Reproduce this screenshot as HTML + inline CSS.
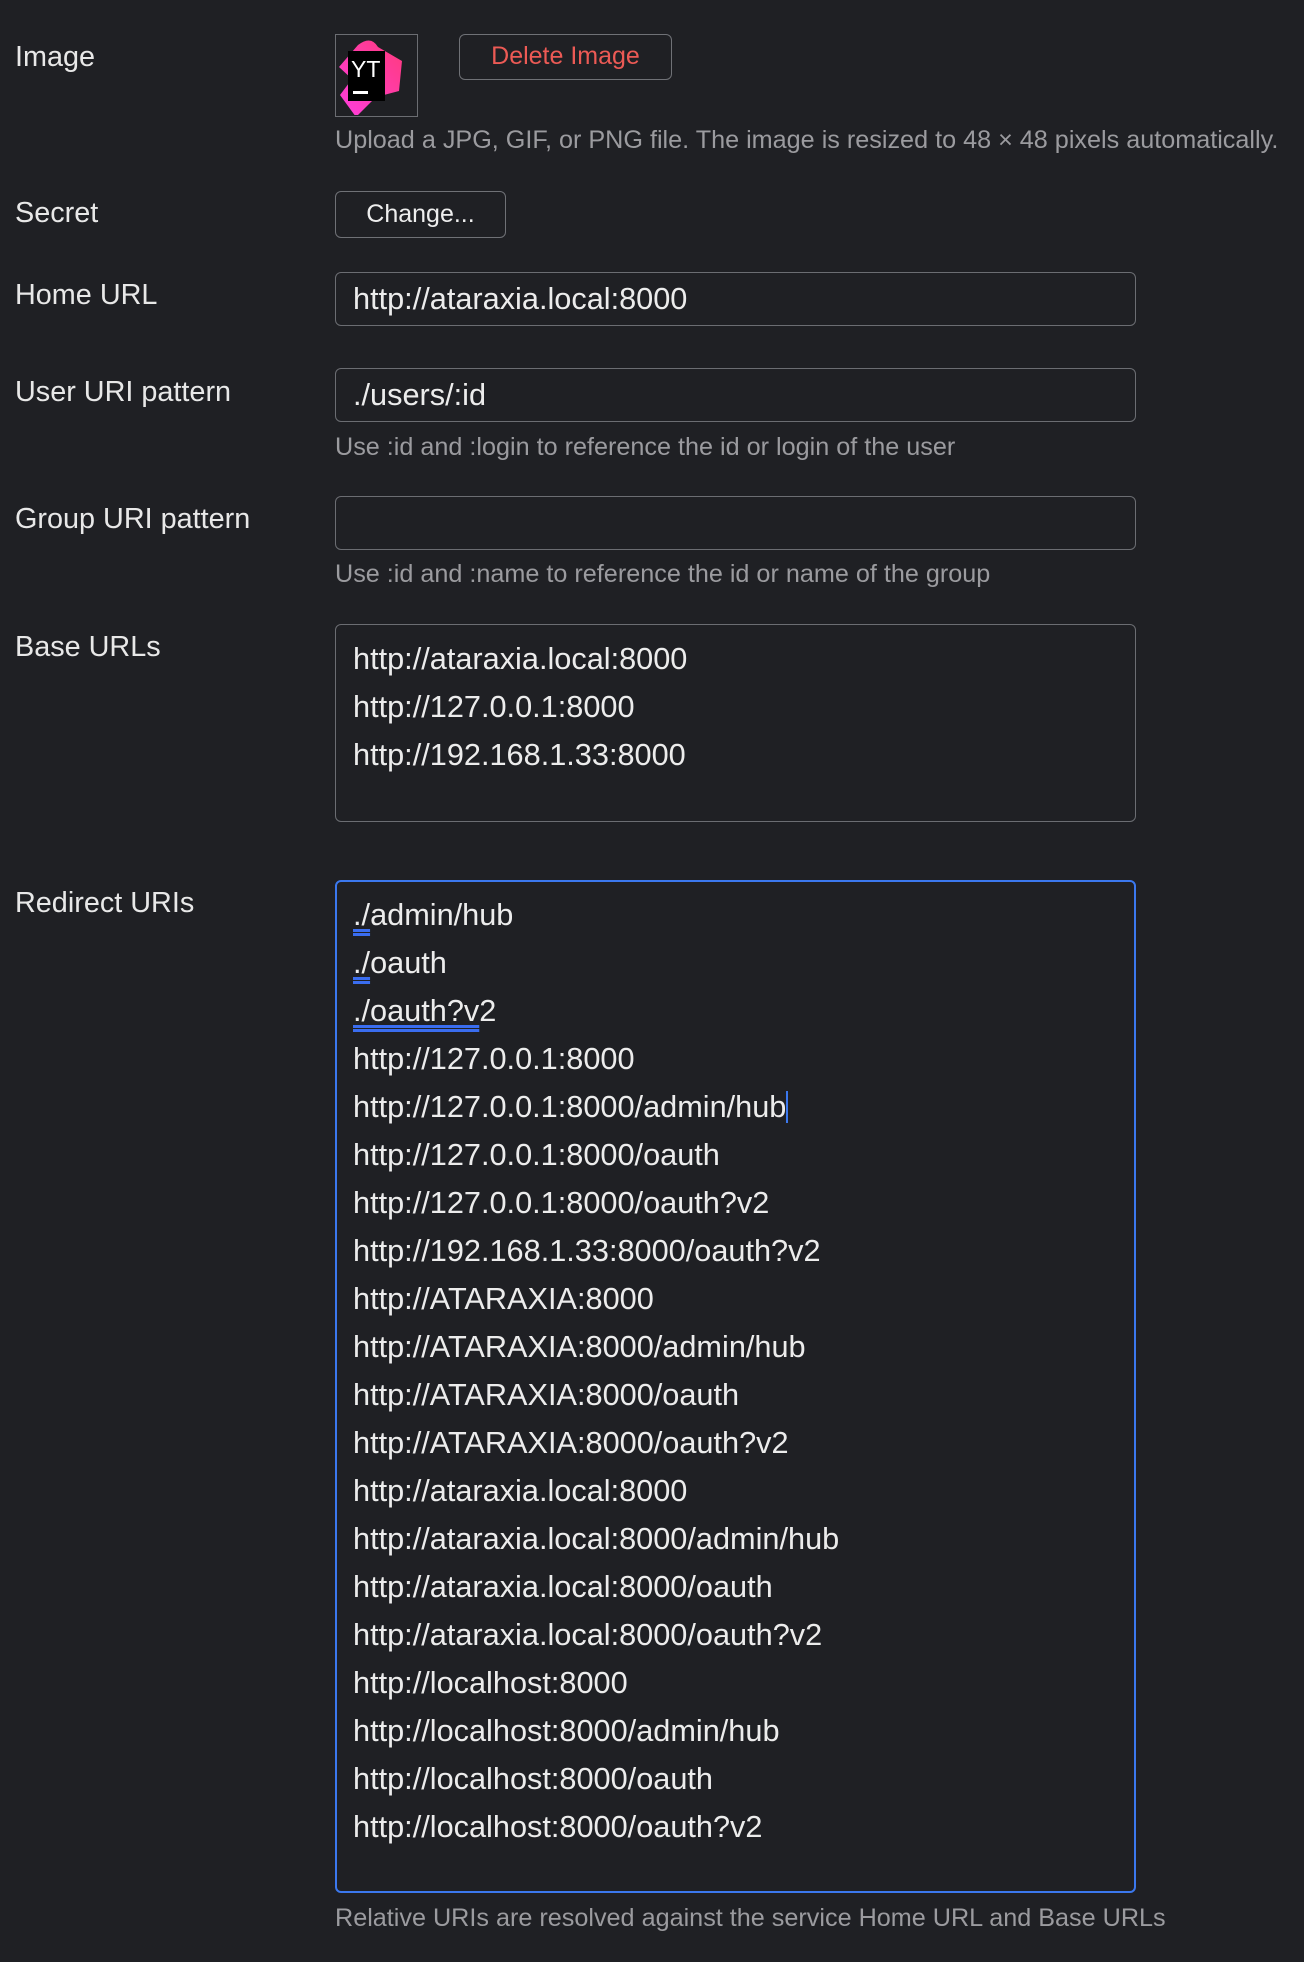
<!DOCTYPE html>
<html><head><meta charset="utf-8"><style>
body{margin:0;width:1304px;height:1962px;background:#1f2024;font-family:"Liberation Sans",sans-serif;color:#e6e6e6;position:relative;overflow:hidden}
.a{position:absolute;white-space:nowrap}
.lbl{font-size:28.8px;line-height:34px;left:15px;color:#e8e8e8}
.help{font-size:25.2px;line-height:28px;left:335px;color:#9b9b9f}
.box{position:absolute;left:335px;width:801px;border:1.5px solid #6b6d72;border-radius:6px;box-sizing:border-box}
.txt{font-size:30.7px;line-height:48px;left:353px;color:#ececec}
.btn{position:absolute;border:1.5px solid #6f7176;border-radius:6px;box-sizing:border-box;font-size:25px;text-align:center}
u{text-decoration:underline double #3a6df0;text-underline-offset:4px}
</style></head><body>
<div class="a lbl" style="top:40px">Image</div>
<div class="a" style="left:335px;top:34px;width:83px;height:83px;border:1.5px solid #6b6d72;box-sizing:border-box">
<svg width="80" height="80" viewBox="0 0 80 80"><defs><linearGradient id="g" x1="0" y1="1" x2="1" y2="0"><stop offset="0" stop-color="#ff3ee0"/><stop offset="1" stop-color="#ff3a7a"/></linearGradient></defs>
<path d="M22 10 Q35 0 42 12 L66 26 L63 56 L40 62 L20 82 L4 60 L16 44 L3 32 Z" fill="url(#g)"/>
<rect x="12" y="16" width="37" height="50" fill="#000"/>
<text x="15" y="42" font-family="Liberation Sans" font-size="23" fill="#fff">YT</text>
<rect x="17" y="56" width="15" height="3" fill="#fff"/></svg></div>
<div class="btn" style="left:459px;top:34px;width:213px;height:46px;line-height:43px;color:#ec5a55">Delete Image</div>
<div class="a help" style="top:126px">Upload a JPG, GIF, or PNG file. The image is resized to 48 × 48 pixels automatically.</div>
<div class="a lbl" style="top:196px">Secret</div>
<div class="btn" style="left:335px;top:191px;width:171px;height:47px;line-height:44px;color:#eee">Change...</div>
<div class="a lbl" style="top:278px">Home URL</div>
<div class="box" style="top:272px;height:54px"></div>
<div class="a txt" style="top:275px">http://ataraxia.local:8000</div>
<div class="a lbl" style="top:375px">User URI pattern</div>
<div class="box" style="top:368px;height:54px"></div>
<div class="a txt" style="top:371px">./users/:id</div>
<div class="a help" style="top:433px">Use :id and :login to reference the id or login of the user</div>
<div class="a lbl" style="top:502px">Group URI pattern</div>
<div class="box" style="top:496px;height:54px"></div>
<div class="a help" style="top:560px">Use :id and :name to reference the id or name of the group</div>
<div class="a lbl" style="top:630px">Base URLs</div>
<div class="box" style="top:624px;height:198px"></div>
<div class="a txt" style="top:635px">http://ataraxia.local:8000<br>http://127.0.0.1:8000<br>http://192.168.1.33:8000</div>
<div class="a lbl" style="top:886px">Redirect URIs</div>
<div class="box" style="top:880px;height:1013px;border:2px solid #3b78ee"></div>
<div class="a txt" style="top:891px"><u>./</u>admin/hub<br><u>./</u>oauth<br><u>./oauth?v</u>2<br>http://127.0.0.1:8000<br>http://127.0.0.1:8000/admin/hub<span style="display:inline-block;width:2px;height:32px;background:#3b78ee;vertical-align:-6px"></span><br>http://127.0.0.1:8000/oauth<br>http://127.0.0.1:8000/oauth?v2<br>http://192.168.1.33:8000/oauth?v2<br>http://ATARAXIA:8000<br>http://ATARAXIA:8000/admin/hub<br>http://ATARAXIA:8000/oauth<br>http://ATARAXIA:8000/oauth?v2<br>http://ataraxia.local:8000<br>http://ataraxia.local:8000/admin/hub<br>http://ataraxia.local:8000/oauth<br>http://ataraxia.local:8000/oauth?v2<br>http://localhost:8000<br>http://localhost:8000/admin/hub<br>http://localhost:8000/oauth<br>http://localhost:8000/oauth?v2</div>
<div class="a help" style="top:1904px">Relative URIs are resolved against the service Home URL and Base URLs</div>
</body></html>
